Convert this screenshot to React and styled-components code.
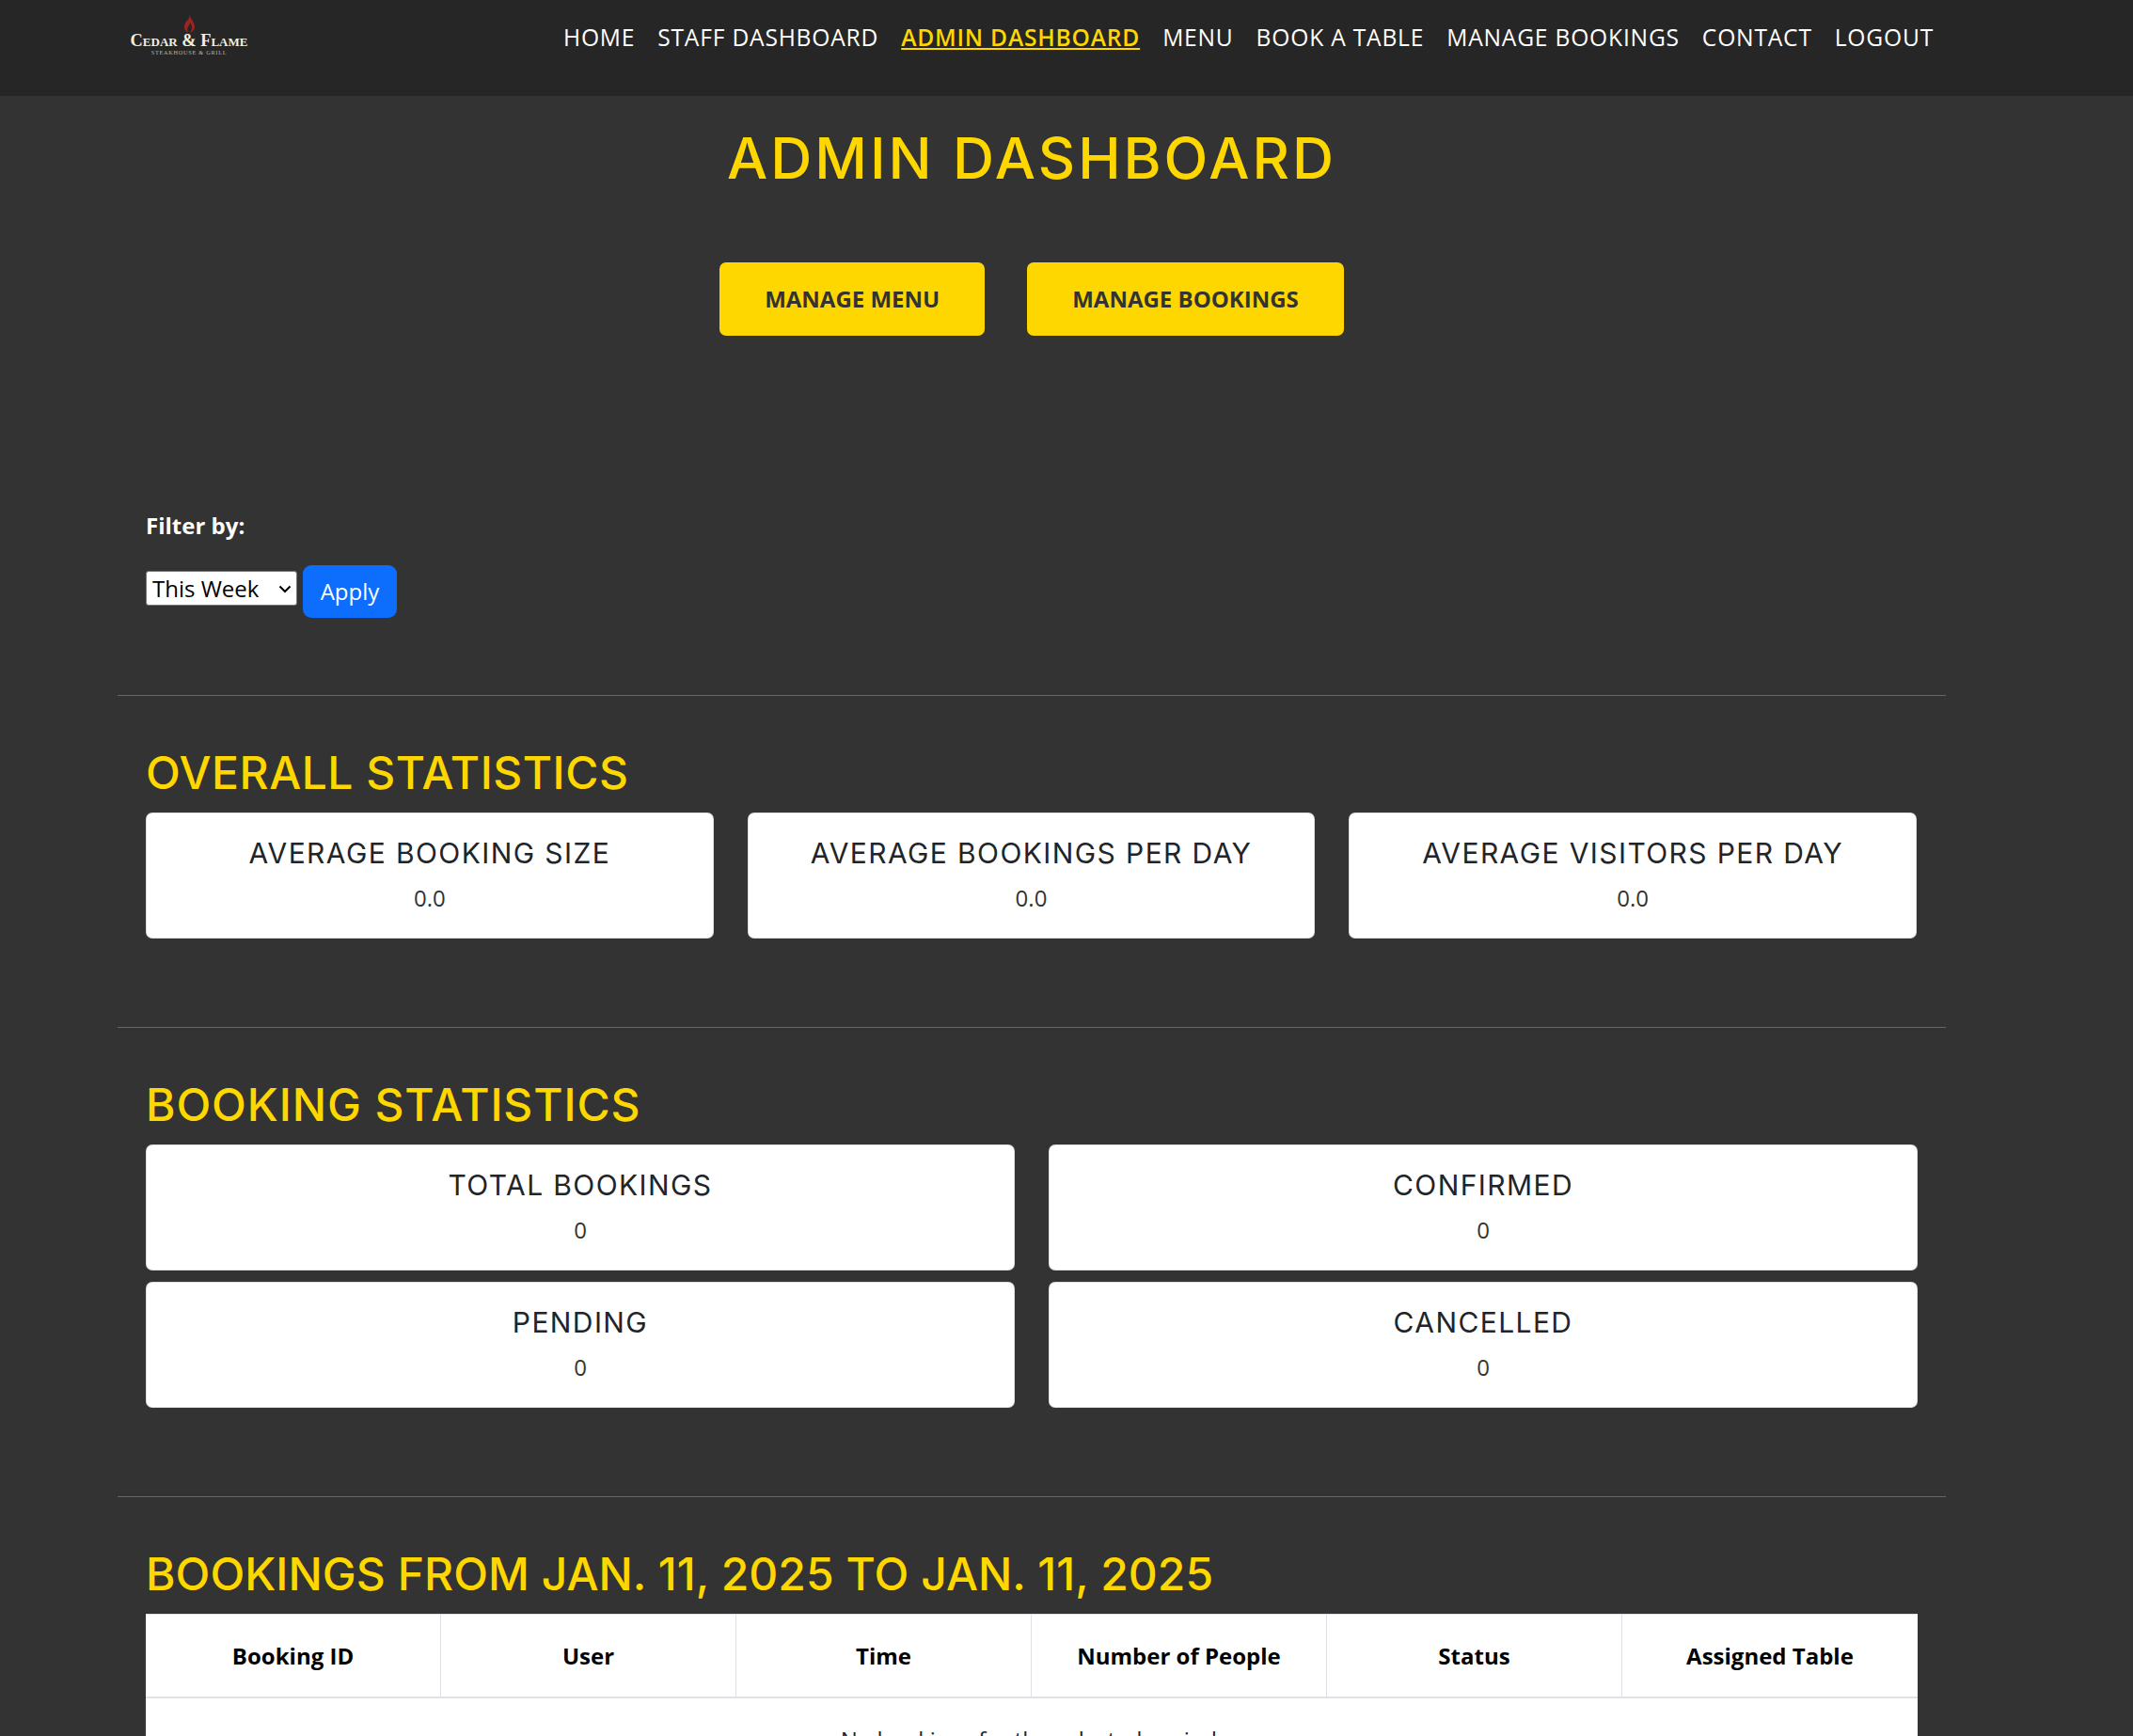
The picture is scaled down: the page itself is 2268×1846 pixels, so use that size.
import React from 'react';
import styled, { createGlobalStyle } from 'styled-components';

const GlobalStyle = createGlobalStyle`
  * { box-sizing: border-box; }
  html, body { margin: 0; padding: 0; height: 1846px; overflow: hidden; background: #333; }
  body { font-family: "Open Sans", "Liberation Sans", sans-serif; font-size: 24px; color: #fff; }
`;

const headingFont = 'Inter, "Liberation Sans", sans-serif';

const Page = styled.div`
  width: 2268px;
  height: 1846px;
  overflow: hidden;
  background: #333;
`;

const Header = styled.header`
  height: 102px;
  background: #262626;
  display: flex;
  align-items: flex-start;
  padding: 0 212px 0 138px;
`;

const Logo = styled.div`
  width: 126px;
  margin-top: 14px;
  display: flex;
  flex-direction: column;
  align-items: center;
`;

const Flame = styled.svg`
  display: block;
  width: 13px;
  height: 21px;
`;

const LogoName = styled.div`
  font-family: "Liberation Serif", serif;
  font-size: 18.4px;
  font-weight: 700;
  line-height: 16px;
  font-variant: small-caps;
  color: #f1eee2;
  white-space: nowrap;
`;

const LogoSub = styled.div`
  font-family: "Liberation Serif", serif;
  font-size: 6.3px;
  line-height: 10px;
  letter-spacing: 0.7px;
  color: #b8b5aa;
  white-space: nowrap;
`;

const Nav = styled.nav`
  margin-left: auto;
  display: flex;
  gap: 24px;
  padding-top: 23px;
`;

const NavLink = styled.a`
  font-size: 24.6px;
  line-height: 34px;
  letter-spacing: 0.8px;
  text-transform: uppercase;
  white-space: nowrap;
  color: ${(p) => (p.$active ? '#ffd700' : '#fff')};
  font-weight: ${(p) => (p.$active ? 600 : 400)};
  text-decoration: ${(p) => (p.$active ? 'underline' : 'none')};
`;

const Main = styled.main`
  width: 1944px;
  margin-left: 125px;
`;

const Title = styled.h1`
  margin: 0;
  padding-top: 31px;
  font-family: ${headingFont};
  font-weight: 500;
  font-size: 61px;
  line-height: 70px;
  letter-spacing: 3px;
  color: #ffd700;
  text-align: center;
  text-transform: uppercase;
  white-space: nowrap;
`;

const ButtonRow = styled.div`
  display: flex;
  justify-content: center;
  gap: 45px;
  margin-top: 76px;
`;

const ActionButton = styled.a`
  height: 78px;
  padding: 0 48px 2px;
  display: flex;
  align-items: center;
  border-radius: 7px;
  background: #ffd700;
  color: #333;
  font-size: 24px;
  font-weight: 700;
  text-transform: uppercase;
`;

const FilterForm = styled.form`
  margin-top: 184px;
  padding: 0 30px;
  height: 198px;
`;

const FilterLabel = styled.label`
  display: block;
  font-size: 24px;
  font-weight: 700;
  line-height: 36px;
`;

const FilterRow = styled.div`
  display: flex;
  align-items: flex-start;
  gap: 6px;
  margin-top: 24px;
`;

const SelectWrap = styled.div`
  position: relative;
  width: 161px;
  height: 37px;
  margin-top: 6px;
`;

const FilterSelect = styled.select`
  appearance: none;
  display: block;
  width: 100%;
  height: 100%;
  padding: 0 0 0 6px;
  font-family: "Open Sans", sans-serif;
  font-size: 24px;
  background: #fff;
  color: #000;
  border: 1px solid #767676;
  border-radius: 3px;
`;

const Chevron = styled.svg`
  position: absolute;
  top: 15px;
  right: 6px;
  width: 14px;
  height: 9px;
  pointer-events: none;
`;

const ApplyButton = styled.button`
  width: 100px;
  height: 56px;
  padding: 0 0 2px;
  border: 0;
  border-radius: 9px;
  background: #0d6efd;
  color: #fff;
  font-family: "Open Sans", sans-serif;
  font-size: 24px;
`;

const Section = styled.section`
  border-top: 1px solid #666;
  padding: 54px 30px 0;
  height: ${(p) => p.$height}px;
`;

const SectionTitle = styled.h2`
  margin: 0 0 14px;
  font-family: ${headingFont};
  font-weight: 500;
  font-size: 48px;
  line-height: 56px;
  letter-spacing: ${(p) => p.$tracking}px;
  color: #ffd700;
  text-transform: uppercase;
  white-space: nowrap;
`;

const CardGrid = styled.div`
  display: grid;
  grid-template-columns: repeat(${(p) => p.$columns}, 1fr);
  column-gap: 36px;
  row-gap: 12px;
  padding-right: ${(p) => (p.$columns === 3 ? 1 : 0)}px;
`;

const Card = styled.div`
  height: 134px;
  padding-top: 22px;
  background: #fff;
  border: 1px solid rgba(0, 0, 0, 0.125);
  border-radius: 7px;
  text-align: center;
`;

const CardTitle = styled.h3`
  margin: 0 0 10px;
  font-family: ${headingFont};
  font-weight: 400;
  font-size: 30px;
  line-height: 40px;
  letter-spacing: 1.4px;
  color: #212529;
  text-transform: uppercase;
  white-space: nowrap;
`;

const CardValue = styled.p`
  margin: 0;
  font-size: 24px;
  line-height: 36px;
  color: #333;
`;

const Table = styled.table`
  width: 100%;
  table-layout: fixed;
  border-collapse: separate;
  border-spacing: 0;
  background: #fff;
`;

const HeadCell = styled.th`
  height: 90px;
  padding: 0 0 1px;
  color: #000;
  font-size: 24px;
  font-weight: 700;
  text-align: center;
  border-top: 1px solid #dee2e6;
  border-right: 1px solid #dee2e6;
  border-bottom: 2px solid #dee2e6;

  &:last-child { border-right: 0; }
`;

const EmptyCell = styled.td`
  padding: 26px 0;
  color: #212529;
  font-size: 24px;
  line-height: 36px;
  text-align: center;
`;

const overall = ['Average Booking Size', 'Average Bookings Per Day', 'Average Visitors Per Day'];
const bookings = ['Total Bookings', 'Confirmed', 'Pending', 'Cancelled'];
const columns = ['Booking ID', 'User', 'Time', 'Number of People', 'Status', 'Assigned Table'];
const links = ['Home', 'Staff Dashboard', 'Admin Dashboard', 'Menu', 'Book a Table', 'Manage Bookings', 'Contact', 'Logout'];

export default function App() {
  return (
    <Page>
      <GlobalStyle />
      <Header>
        <Logo>
          <Flame viewBox="0 0 13 21">
            <path d="M6 0c1.500 3.500 0 5.500-2.500 8.500C1.500 11 .5 13.500 1 16c.5 2.500 2.500 4 4.500 5-1.500-2-1.800-4-.8-6 .8-1.500 2-2.800 2.300-4.800 1.500 1.500 2.600 3.600 2 6.300-.3 1.800-1.200 3.200-2.300 4.300 3-.8 5.100-2.900 5.300-5.800C12.300 10 7.500 6.500 6 0z" fill="#9c2420" />
          </Flame>
          <LogoName>Cedar &amp; Flame</LogoName>
          <LogoSub>STEAKHOUSE &amp; GRILL</LogoSub>
        </Logo>
        <Nav>
          {links.map((l) => (
            <NavLink key={l} $active={l === 'Admin Dashboard'}>{l}</NavLink>
          ))}
        </Nav>
      </Header>
      <Main>
        <Title>Admin Dashboard</Title>
        <ButtonRow>
          <ActionButton>Manage Menu</ActionButton>
          <ActionButton>Manage Bookings</ActionButton>
        </ButtonRow>
        <FilterForm>
          <FilterLabel>Filter by:</FilterLabel>
          <FilterRow>
            <SelectWrap>
              <FilterSelect defaultValue="week">
                <option value="week">This Week</option>
              </FilterSelect>
              <Chevron viewBox="0 0 14 9">
                <path d="M1.500 1.500 7 7l5.500-5.500" fill="none" stroke="#000" strokeWidth="2" />
              </Chevron>
            </SelectWrap>
            <ApplyButton type="button">Apply</ApplyButton>
          </FilterRow>
        </FilterForm>
        <Section $height={353}>
          <SectionTitle $tracking={0.5}>Overall Statistics</SectionTitle>
          <CardGrid $columns={3}>
            {overall.map((t) => (
              <Card key={t}>
                <CardTitle>{t}</CardTitle>
                <CardValue>0.0</CardValue>
              </Card>
            ))}
          </CardGrid>
        </Section>
        <Section $height={499}>
          <SectionTitle $tracking={0.9}>Booking Statistics</SectionTitle>
          <CardGrid $columns={2}>
            {bookings.map((t) => (
              <Card key={t}>
                <CardTitle>{t}</CardTitle>
                <CardValue>0</CardValue>
              </Card>
            ))}
          </CardGrid>
        </Section>
        <Section $height={400}>
          <SectionTitle $tracking={0.05}>Bookings from Jan. 11, 2025 to Jan. 11, 2025</SectionTitle>
          <Table>
            <thead>
              <tr>
                {columns.map((c) => <HeadCell key={c}>{c}</HeadCell>)}
              </tr>
            </thead>
            <tbody>
              <tr>
                <EmptyCell colSpan={6}>No bookings for the selected period.</EmptyCell>
              </tr>
            </tbody>
          </Table>
        </Section>
      </Main>
    </Page>
  );
}
